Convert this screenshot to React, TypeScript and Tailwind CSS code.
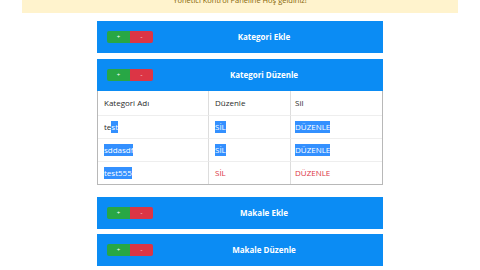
import React from 'react'

const font = { fontFamily: '"Open Sans", "Noto Sans", "Liberation Sans", sans-serif' }

function Sel({ children }: { children: React.ReactNode }) {
  return <span className="bg-[#3390ff] text-white">{children}</span>
}

function PanelHeader({ title }: { title: string }) {
  return (
    <div className="h-[32px] bg-[#0b8cf4] flex items-center pl-[10px] pr-[8px]">
      <div className="flex h-[12px] rounded-[2px] overflow-hidden">
        <div className="w-[23px] bg-[#28a745] text-white text-[6px] leading-[12px] text-center">+</div>
        <div className="w-[23px] bg-[#dc3545] text-white text-[6px] leading-[12px] text-center">-</div>
      </div>
      <div className="flex-1 text-center text-white text-[8px] font-bold">{title}</div>
    </div>
  )
}

type Row = { name: React.ReactNode; sil: React.ReactNode; duz: React.ReactNode }

const rows: Row[] = [
  { name: <>te<Sel>st</Sel></>, sil: <Sel>SİL</Sel>, duz: <Sel>DÜZENLE</Sel> },
  { name: <Sel>sddasdf</Sel>, sil: <Sel>SİL</Sel>, duz: <Sel>DÜZENLE</Sel> },
  {
    name: <Sel>test555</Sel>,
    sil: <span className="text-[#dc3545]">SİL</span>,
    duz: <span className="text-[#dc3545]">DÜZENLE</span>,
  },
]

export default function App() {
  return (
    <div className="w-[480px] h-[270px] bg-white overflow-hidden" style={font}>
      <div className="ml-[22px] w-[436px] h-[13px] bg-[#fff3cd] overflow-hidden text-center text-[#856404] text-[7.5px] leading-[10px]">
        <div className="-mt-[5px]">Yönetici Kontrol Paneline Hoş geldiniz!</div>
      </div>
      <div className="mx-auto w-[286px] mt-[8px] flex flex-col">
        <PanelHeader title="Kategori Ekle" />
        <div className="mt-[6px]">
          <PanelHeader title="Kategori Düzenle" />
          <div className="border border-t-0 border-[#b8b8b8] text-[8px] text-[#2b2b2b]">
            <div className="flex h-[24px] items-center">
              <div className="w-[111px] h-full flex items-center pl-[6px] border-r border-[#ddd]">Kategori Adı</div>
              <div className="w-[82px] h-full flex items-center pl-[6px] border-r border-[#ddd]">Düzenle</div>
              <div className="flex-1 pl-[4px]">Sil</div>
            </div>
            {rows.map((r, i) => (
              <div key={i} className="flex h-[23px] items-center">
                <div className="w-[111px] h-full flex items-center pl-[6px] border-r border-[#ddd] border-t border-t-[#eee]">{r.name}</div>
                <div className="w-[82px] h-full flex items-center pl-[6px] border-r border-[#ddd] border-t border-t-[#eee]">{r.sil}</div>
                <div className="flex-1 h-full flex items-center pl-[4px] border-t border-t-[#eee]">{r.duz}</div>
              </div>
            ))}
          </div>
        </div>
        <div className="mt-[12px]">
          <PanelHeader title="Makale Ekle" />
        </div>
        <div className="mt-[5px]">
          <PanelHeader title="Makale Düzenle" />
        </div>
      </div>
    </div>
  )
}
